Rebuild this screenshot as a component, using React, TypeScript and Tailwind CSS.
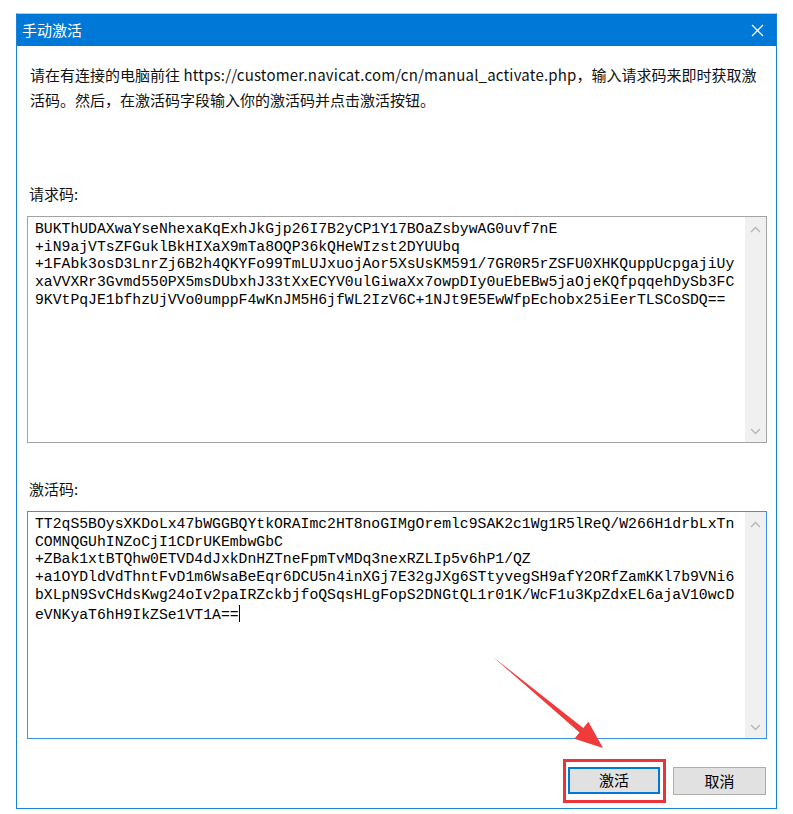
import React from "react";

const cjk = { fontFamily: '"Noto Sans CJK SC", "Noto Sans", sans-serif' };
const mono = { fontFamily: '"Liberation Mono", "DejaVu Sans Mono", monospace' };

const requestLines = [
    "BUKThUDAXwaYseNhexaKqExhJkGjp26I7B2yCP1Y17BOaZsbywAG0uvf7nE",
    "+iN9ajVTsZFGuklBkHIXaX9mTa8OQP36kQHeWIzst2DYUUbq",
    "+1FAbk3osD3LnrZj6B2h4QKYFo99TmLUJxuojAor5XsUsKM591/7GR0R5rZSFU0XHKQuppUcpgajiUy",
    "xaVVXRr3Gvmd550PX5msDUbxhJ33tXxECYV0ulGiwaXx7owpDIy0uEbEBw5jaOjeKQfpqqehDySb3FC",
    "9KVtPqJE1bfhzUjVVo0umppF4wKnJM5H6jfWL2IzV6C+1NJt9E5EwWfpEchobx25iEerTLSCoSDQ==",
];

const activationLines = [
    "TT2qS5BOysXKDoLx47bWGGBQYtkORAImc2HT8noGIMgOremlc9SAK2c1Wg1R5lReQ/W266H1drbLxTn",
    "COMNQGUhINZoCjI1CDrUKEmbwGbC",
    "+ZBak1xtBTQhw0ETVD4dJxkDnHZTneFpmTvMDq3nexRZLIp5v6hP1/QZ",
    "+a1OYDldVdThntFvD1m6WsaBeEqr6DCU5n4inXGj7E32gJXg6STtyvegSH9afY2ORfZamKKl7b9VNi6",
    "bXLpN9SvCHdsKwg24oIv2paIRZckbjfoQSqsHLgFopS2DNGtQL1r01K/WcF1u3KpZdxEL6ajaV10wcD",
    "eVNKyaT6hH9IkZSe1VT1A==",
];

const Chevron = ({ up }: { up?: boolean }) => (
    <svg width="11" height="7" viewBox="0 0 11 7" fill="none">
        <polyline
            points={up ? "1,6 5.5,1.5 10,6" : "1,1 5.5,5.5 10,1"}
            stroke="#b4b4b4"
            strokeWidth="1.3"
        />
    </svg>
);

const CodeBox = ({
    lines,
    focused,
    height,
    caret,
}: {
    lines: string[];
    focused?: boolean;
    height: string;
    caret?: boolean;
}) => (
    <div
        className={`flex ${height} border ${
            focused ? "border-[#3a94e0]" : "border-[#a3a3a3]"
        } bg-white`}
    >
        <div className="flex-1 pl-[7px] pt-[4px] text-[14.75px] leading-[17.7px] text-black" style={mono}>
            {lines.map((l, i) => (
                <div key={i} className="whitespace-pre">
                    {l}
                    {caret && i === lines.length - 1 && (
                        <span className="inline-block w-[1.5px] h-[17px] bg-black align-[-3px]" />
                    )}
                </div>
            ))}
        </div>
        <div className="w-[21px] bg-[#f0f0f0] flex flex-col items-center justify-between pt-[9px] pb-[7px]">
            <Chevron up />
            <Chevron />
        </div>
    </div>
);

export default function App() {
    return (
        <div className="relative w-[793px] h-[814px] bg-white pt-[13px] pl-[16px]" style={cjk}>
            <div className="w-[761px] border border-[#1883d7] border-t-[#a9d0ef] bg-white">
                {/* Title bar */}
                <div className="h-[32px] bg-[#0078d7] flex items-center justify-between pl-[5px] pr-[12px]">
                    <span className="text-white text-[15px]">手动激活</span>
                    <svg width="13" height="13" viewBox="0 0 13 13">
                        <line x1="1" y1="1" x2="12" y2="12" stroke="white" strokeWidth="1.2" />
                        <line x1="12" y1="1" x2="1" y2="12" stroke="white" strokeWidth="1.2" />
                    </svg>
                </div>

                {/* Body */}
                <div className="pl-[10px] pr-[9px] pt-[16px] pb-[13px]">
                    <p className="pl-[3px] text-[15px] leading-[25px] text-[#111] whitespace-nowrap">
                        请在有连接的电脑前往{" "}
                        <span className="tracking-[0.2px]">https://customer.navicat.com/cn/manual_activate.php</span>
                        ，输入请求码来即时获取激
                        <br />
                        活码。然后，在激活码字段输入你的激活码并点击激活按钮。
                    </p>

                    <div className="mt-[72px] pl-[2px] text-[15px] leading-[20px] text-[#111]">请求码:</div>
                    <div className="mt-[12px]">
                        <CodeBox lines={requestLines} height="h-[227px]" />
                    </div>

                    <div className="mt-[36px] pl-[2px] text-[15px] leading-[20px] text-[#111]">激活码:</div>
                    <div className="mt-[12px]">
                        <CodeBox lines={activationLines} height="h-[228px]" focused caret />
                    </div>

                    <div className="mt-[28px] flex justify-end gap-[13px] pr-[1px]">
                        <button className="relative w-[92px] h-[27px] border-2 border-[#0078d7] bg-[#e1e1e1] text-[15px] text-black">
                            激活
                            <span className="absolute -left-[7px] -right-[8px] -top-[10px] -bottom-[11px] border-[3px] border-[#ec3339]" />
                        </button>
                        <button className="w-[93px] h-[28px] border border-[#adadad] bg-[#e1e1e1] text-[15px] text-black">
                            取消
                        </button>
                    </div>
                </div>
            </div>

            {/* Annotation arrow */}
            <svg className="absolute left-0 top-0" width="793" height="814" viewBox="0 0 793 814">
                <polygon
                    points="493,657 583.3,727.9 588.4,721.7 603,748 574.4,738.7 579.5,732.5"
                    fill="#ef3b3b"
                />
            </svg>
        </div>
    );
}
